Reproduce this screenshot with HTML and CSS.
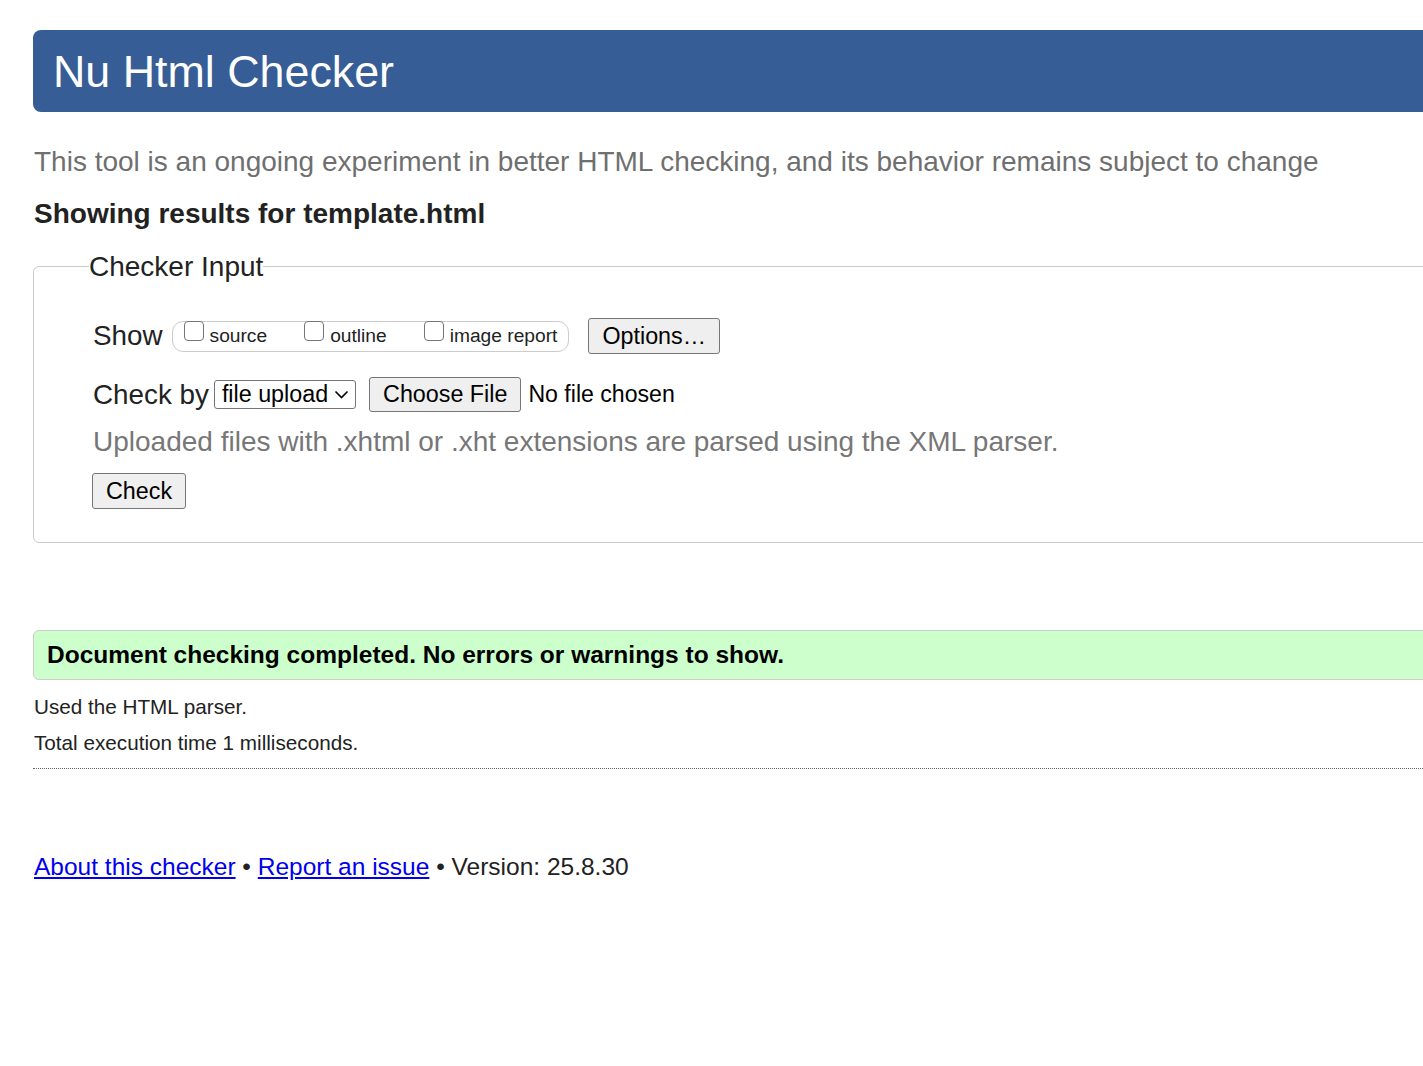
FILE: index.html
```html
<!DOCTYPE html>
<html lang="en">
<head>
<meta charset="utf-8">
<title>Showing results for template.html - Nu Html Checker</title>
<link rel="stylesheet" href="styles.css">
</head>
<body>
<h1 class="masthead">Nu Html Checker</h1>
<p class="tagline">This tool is an ongoing experiment in better HTML checking, and its behavior remains subject to change</p>
<p class="results-for">Showing results for template.html</p>
<form class="checker">
  <fieldset class="input-box">
    <legend class="input-legend">Checker Input</legend>
    <div class="row show-row">
      <span class="row-label">Show</span>
      <span class="show-group">
        <label class="opt"><input type="checkbox" class="cb"><span>source</span></label>
        <label class="opt"><input type="checkbox" class="cb"><span>outline</span></label>
        <label class="opt"><input type="checkbox" class="cb"><span>image report</span></label>
      </span>
      <button type="button" class="btn options-btn">Options…</button>
    </div>
    <div class="row check-row">
      <span class="row-label">Check by</span>
      <span class="select">file upload<svg class="chev" width="15" height="9" viewBox="0 0 15 9"><path d="M1.5 1.5 L7.5 7.5 L13.5 1.5" fill="none" stroke="#000" stroke-width="1.6"/></svg></span>
      <span class="btn file-btn">Choose File</span>
      <span class="file-status">No file chosen</span>
    </div>
    <p class="hint">Uploaded files with .xhtml or .xht extensions are parsed using the XML parser.</p>
    <button type="button" class="btn check-btn">Check</button>
  </fieldset>
</form>
<div class="success">Document checking completed. No errors or warnings to show.</div>
<p class="meta meta-first">Used the HTML parser.</p>
<p class="meta">Total execution time 1 milliseconds.</p>
<hr class="dots">
<p class="footer"><a href="#about">About this checker</a> • <a href="#issue">Report an issue</a> • Version: 25.8.30</p>
</body>
</html>
```

FILE: styles.css
```css
html {
  overflow-x: hidden;
  background: #fff;
}
body {
  margin: 0;
  padding: 30px 0 40px 33px;
  font-family: "Liberation Sans", Arial, sans-serif;
  color: #222;
  background: #fff;
}
.masthead, .tagline, .results-for, .checker, .success, .dots, .meta, .footer {
  margin-right: -40px;
}
.masthead {
  margin-top: 0;
  margin-bottom: 0;
  height: 82px;
  line-height: 82px;
  font-size: 44.8px;
  font-weight: normal;
  padding-left: 20px;
  background: #365d95;
  color: #fff;
  border-radius: 8px;
}
.tagline {
  margin-top: 34px;
  margin-bottom: 0;
  padding-left: 1px;
  font-size: 28px;
  line-height: 31px;
  color: #6f6f6f;
}
.results-for {
  margin-top: 21px;
  margin-bottom: 0;
  padding-left: 1px;
  font-size: 28px;
  line-height: 31px;
  font-weight: bold;
  color: #222;
}
.checker {
  margin-top: 22px;
}
.input-box {
  margin: 0;
  padding: 36px 20px 33px 55px;
  border: 1px solid #ccc;
  border-radius: 6px;
  min-width: 0;
}
.input-legend {
  padding: 0;
  font-size: 28px;
  line-height: 31px;
  color: #222;
}
.row {
  display: flex;
  align-items: center;
  padding-left: 4px;
}
.show-row {
  height: 36px;
}
.check-row {
  height: 35px;
  margin-top: 23px;
}
.row-label {
  font-size: 27.8px;
  color: #222;
}
.show-group {
  display: flex;
  align-items: center;
  margin-left: 9px;
  height: 29px;
  padding: 0 11px 0 11px;
  border: 1px solid #ccc;
  border-radius: 11px;
  gap: 37px;
}
.opt {
  display: flex;
  align-items: center;
  font-size: 19.2px;
  color: #222;
}
.cb {
  appearance: none;
  -webkit-appearance: none;
  width: 20px;
  height: 20px;
  margin: 0 6px 10px 0;
  border: 1.6px solid #767676;
  border-radius: 4px;
  background: #fff;
  box-sizing: border-box;
}
.btn {
  display: inline-flex;
  align-items: center;
  box-sizing: border-box;
  font-family: "Liberation Sans", Arial, sans-serif;
  font-size: 23.3px;
  color: #000;
  background: #efefef;
  border: 1px solid #767676;
  border-radius: 3px;
  padding: 0 13px;
}
.options-btn {
  margin-left: 19px;
  height: 36px;
}
.select {
  display: inline-flex;
  align-items: center;
  box-sizing: border-box;
  height: 29px;
  margin-left: 5px;
  padding: 0 6px 0 7px;
  font-size: 23.3px;
  color: #000;
  background: #fff;
  border: 1px solid #767676;
  border-radius: 3px;
}
.chev {
  margin-left: 6px;
}
.file-btn {
  margin-left: 13px;
  height: 35px;
}
.file-status {
  margin-left: 7px;
  font-size: 23.1px;
  color: #000;
}
.hint {
  margin: 14px 0 0;
  padding-left: 4px;
  font-size: 28px;
  line-height: 32px;
  color: #777;
}
.check-btn {
  margin-top: 15px;
  margin-left: 3px;
  height: 36px;
  padding: 0 13px 0 13px;
}
.success {
  margin-top: 87px;
  height: 50px;
  box-sizing: border-box;
  line-height: 48px;
  padding-left: 13px;
  background: #ccffcc;
  border: 1px solid #ccc;
  border-radius: 6px;
  font-size: 24.5px;
  font-weight: bold;
  color: #000;
}
.meta {
  margin-top: 12px;
  margin-bottom: 0;
  padding-left: 1px;
  font-size: 20.7px;
  line-height: 24px;
  color: #222;
}
.meta-first {
  margin-top: 15px;
}
.dots {
  margin-top: 13px;
  margin-bottom: 0;
  margin-left: 0;
  height: 0;
  border: 0;
  border-top: 1px dotted #666;
}
.footer {
  margin-top: 85px;
  margin-bottom: 0;
  padding-left: 1px;
  font-size: 24.5px;
  line-height: 26px;
  color: #222;
}
.footer a {
  color: #0000ee;
}
```
